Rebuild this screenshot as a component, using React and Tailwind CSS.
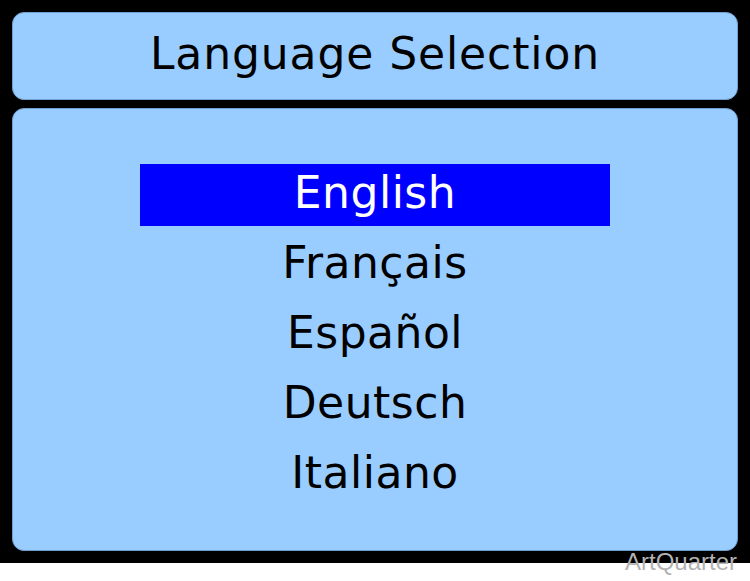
export default function App() {
  const items = ["English", "Français", "Español", "Deutsch", "Italiano"];
  return (
    <div className="relative w-[750px] h-[581px] bg-white overflow-hidden">
      <div className="flex h-[563px] flex-col gap-2 bg-black p-3">
        <div className="flex h-[88px] items-center justify-center rounded-[12px] border border-[#6f9fd0] bg-[#99ccff] pb-1">
          <span className="text-[44px] leading-none tracking-[0.9px] text-black" style={{ fontFamily: '"DejaVu Sans", sans-serif' }}>
            Language Selection
          </span>
        </div>
        <div className="flex flex-1 flex-col items-center gap-2 rounded-[12px] border border-[#6f9fd0] bg-[#99ccff] pt-[55px]">
          {items.map((it, i) => (
            <div
              key={it}
              className={
                i === 0
                  ? "flex h-[62px] w-[470px] items-center justify-center bg-[#0000ff] pb-1 text-[44px] leading-none tracking-[0.5px] text-white"
                  : "flex h-[62px] w-[470px] items-center justify-center pb-1 text-[44px] leading-none tracking-[0.5px] text-black"
              }
              style={{ fontFamily: '"DejaVu Sans", sans-serif' }}
            >
              {it}
            </div>
          ))}
        </div>
      </div>
      <div
        className="absolute right-[13px] top-[550px] text-[24px] leading-none text-[#b3b3b3]"
        style={{ fontFamily: '"Liberation Sans", Arial, sans-serif' }}
      >
        ArtQuarter
      </div>
    </div>
  );
}
